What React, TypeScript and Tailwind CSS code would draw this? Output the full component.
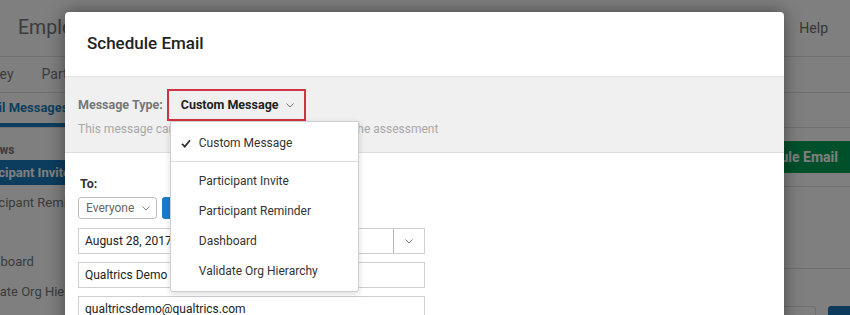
import React from "react";

const Chevron = ({ className = "" }: { className?: string }) => (
  <svg width="8" height="5" viewBox="0 0 8 5" className={className}>
    <path d="M0.5 0.5 L4 4 L7.5 0.5" fill="none" stroke="currentColor" strokeWidth="1" />
  </svg>
);

const Check = () => (
  <svg width="10" height="9" viewBox="0 0 10 9" className="text-[#333]">
    <path d="M1 4.8 L3.8 7.6 L9 1.2" fill="none" stroke="currentColor" strokeWidth="1.8" />
  </svg>
);

const menuItems = ["Participant Invite", "Participant Reminder", "Dashboard", "Validate Org Hierarchy"];

export default function App() {
  return (
    <div className="relative w-[850px] h-[315px] overflow-hidden bg-white font-['Roboto',sans-serif]">
      {/* Page behind the modal */}
      <div className="flex flex-col h-full">
        <header className="h-[57px] flex items-center justify-between border-b border-[#e0e0e0] pl-[18px] pr-[22px] shrink-0">
          <span className="text-[19.5px] text-[#777]">Employee Engagement</span>
          <span className="text-[14px] text-[#6e6e6e]">Help</span>
        </header>
        <div className="h-[36px] border-b border-[#e0e0e0] shrink-0">
          <div className="-ml-[28px] h-full flex items-center gap-[28px] text-[14px] text-[#7a7a7a]">
            <span>Survey</span>
            <span>Participants</span>
            <span>Messages</span>
          </div>
        </div>
        <div className="h-[35px] border-b border-[#e0e0e0] shrink-0">
          <div className="-ml-[27px] h-full flex items-stretch gap-[24px] text-[13px] font-bold">
            <span className="flex items-center border-b-[4px] border-[#1b7bbd] text-[#1e7ebd] pr-[12px]">
              Email Messages
            </span>
            <span className="flex items-center text-[#7a7a7a]">Reports</span>
          </div>
        </div>
        <div className="flex flex-1">
          <aside className="w-[200px] shrink-0 pt-[14px] text-[13px]">
            <div className="-ml-[18px] leading-4 font-bold text-[12px] text-[#777]">Views</div>
            <div className="mt-[2px] h-[25px] bg-[#1a7abd] text-white font-bold flex items-center">
              <span className="-ml-[30px]">Participant Invite</span>
            </div>
            <div className="h-[36px] flex items-center text-[#777]">
              <span className="-ml-[29px]">Participant Reminder</span>
            </div>
            <div className="h-[26px]" />
            <div className="h-[30px] flex items-center text-[#777]">
              <span className="-ml-[29px]">Dashboard</span>
            </div>
            <div className="h-[30px] flex items-center text-[#777]">
              <span className="-ml-[29px]">Validate Org Hierarchy</span>
            </div>
          </aside>
          <main className="flex-1 flex flex-col pt-[13px]">
            <div className="flex justify-end">
              <button className="h-[32px] bg-[#00a257] text-white font-bold text-[14px] pl-[14px] pr-[12px] rounded-l-[3px]">
                Schedule Email
              </button>
            </div>
            <div className="mt-[13px] border-b border-[#e0e0e0]" />
            <div className="h-[82px] border-b border-[#e0e0e0]" />
            <div className="mt-[37px] flex justify-end gap-[12px] pr-0">
              <div className="w-[90px] h-[24px] border border-[#e0e0e0] rounded-[3px]" />
              <div className="w-[22px] h-[24px] bg-[#1a76b6] rounded-l-[3px]" />
            </div>
          </main>
        </div>
      </div>

      {/* Overlay */}
      <div className="absolute inset-0 bg-black/50" />

      {/* Modal */}
      <div className="absolute left-[65px] top-[12px] w-[719px] h-[330px] bg-white rounded-t-[4px] shadow-[0_0_18px_rgba(0,0,0,0.45)]">
        <div className="h-[65px] flex items-center pl-[22px] border-b border-[#e2e2e2]">
          <h2 className="text-[17px] font-medium text-[#222]">Schedule Email</h2>
        </div>

        <div className="bg-[#f0f0f0] border-b border-[#dcdcdc] px-[13px] pt-[12px] pb-[15px]">
          <div className="flex items-center h-[32px]">
            <span className="text-[12.5px] font-bold text-[#777]">Message Type:</span>
            <div className="relative ml-[4px]">
              <div className="w-[139px] h-[32px] border-2 border-[#d0343f] flex items-center justify-between pl-[12px] pr-[10px]">
                <span className="text-[12.5px] font-bold text-[#222]">Custom Message</span>
                <Chevron className="text-[#777]" />
              </div>

              {/* Dropdown menu */}
              <div className="absolute left-[3px] top-full w-[189px] z-10 bg-white border border-[#cfcfcf] rounded-b-[3px] shadow-[0_2px_6px_rgba(0,0,0,0.15)] pt-[6px] pb-[5px] text-[12px] text-[#333]">
                <div className="h-[30px] flex items-center pl-[10px] gap-[8px]">
                  <Check />
                  <span>Custom Message</span>
                </div>
                <div className="mt-[3px] mb-[4px] border-t border-[#dcdcdc]" />
                {menuItems.map((item) => (
                  <div key={item} className="h-[30px] flex items-center pl-[28px]">
                    {item}
                  </div>
                ))}
              </div>
            </div>
          </div>
          <p className="text-[12px] leading-4 text-[#a8a8a8]">
            This message can be sent to all participants before the assessment
          </p>
        </div>

        <div className="px-[13px] pt-[23px] text-[12px]">
          <div className="pl-[2px] leading-4 text-[12.5px] font-bold text-[#333]">To:</div>
          <div className="mt-[5px] flex gap-[5px]">
            <div className="w-[79px] h-[22px] border border-[#bdbdbd] rounded-[3px] flex items-center justify-between pl-[7px] pr-[6px] text-[#666]">
              <span>Everyone</span>
              <Chevron className="text-[#888]" />
            </div>
            <div className="w-[70px] h-[22px] bg-[#1b7ccc] rounded-[3px]" />
          </div>
          <div className="mt-[9px] w-[347px] h-[26px] border border-[#cfcfcf] flex items-stretch text-[#222]">
            <div className="flex-1 flex items-center pl-[6px]">August 28, 2017</div>
            <div className="w-[31px] border-l border-[#b5b5b5] flex items-center justify-center">
              <Chevron className="text-[#777]" />
            </div>
          </div>
          <div className="mt-[8px] w-[347px] h-[26px] border border-[#cfcfcf] flex items-center pl-[6px] text-[#222]">
            Qualtrics Demo
          </div>
          <div className="mt-[8px] w-[347px] h-[26px] border border-[#cfcfcf] flex items-center pl-[6px] text-[#222]">
            qualtricsdemo@qualtrics.com
          </div>
        </div>
      </div>
    </div>
  );
}
